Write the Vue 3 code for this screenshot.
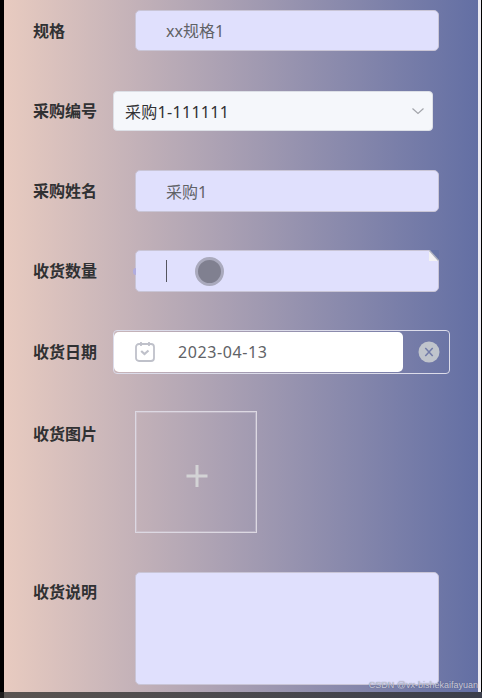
<script setup>
import { ref } from 'vue'

const form = ref({
  spec: 'xx规格1',
  orderNo: '采购1-111111',
  buyer: '采购1',
  date: '2023-04-13'
})
</script>

<template>
  <div class="page">
    <div class="form">
      <div class="row row-spec">
        <div class="label">规格</div>
        <div class="input input-spec">{{ form.spec }}</div>
      </div>

      <div class="row row-select">
        <div class="label">采购编号</div>
        <div class="select">
          <span>{{ form.orderNo }}</span>
          <svg class="arrow" viewBox="0 0 14 8" width="14" height="8">
            <path d="M1.5 1.5 L7 6.5 L12.5 1.5" fill="none" stroke="#a3a5ab" stroke-width="1.2" />
          </svg>
        </div>
      </div>

      <div class="row">
        <div class="label">采购姓名</div>
        <div class="input">{{ form.buyer }}</div>
      </div>

      <div class="row">
        <div class="label">收货数量</div>
        <div class="input input-active">
          <span class="knob"></span>
          <span class="caret"></span>
          <span class="touch"></span>
          <svg class="fold" viewBox="0 0 10 11" width="10" height="11">
            <path d="M0 0 H10 V11 Z" fill="#6673a5" />
            <path d="M0 0 L10 11 H0 Z" fill="#f3f2f3" />
            <path d="M0.5 0.5 L9.5 10.5" stroke="#aaaebd" stroke-width="1.4" />
          </svg>
        </div>
      </div>

      <div class="row row-date">
        <div class="label">收货日期</div>
        <div class="date">
          <div class="date-inner">
            <svg class="calendar" viewBox="0 0 20 20" width="20" height="20">
              <rect x="1" y="2" width="18" height="17" rx="3" fill="none" stroke="#bfc1ca" stroke-width="1.8" />
              <path d="M6 0 V4 M14 0 V4" stroke="#bfc1ca" stroke-width="1.8" />
              <path d="M6.2 9 L9.5 12 L13.5 8.5" fill="none" stroke="#bfc1ca" stroke-width="2.2" />
            </svg>
            <span>{{ form.date }}</span>
          </div>
          <svg class="clear" viewBox="0 0 22 22" width="22" height="22">
            <circle cx="11" cy="11" r="10.5" fill="#c0c4cc" />
            <path d="M7.3 7 L14.7 15 M14.7 7 L7.3 15" stroke="#727ba8" stroke-width="1.5" />
          </svg>
        </div>
      </div>

      <div class="row row-image">
        <div class="label">收货图片</div>
        <div class="upload">
          <svg viewBox="0 0 22 22" width="22" height="22">
            <path d="M11 0 V22 M0.5 11 H21.5" stroke="#d3d3d5" stroke-width="3" />
          </svg>
        </div>
      </div>

      <div class="row row-note">
        <div class="label">收货说明</div>
        <div class="input textarea"></div>
      </div>
    </div>

    <div class="bottom-bar"></div>
    <div class="watermark">CSDN @vx-bishekaifayuan</div>
  </div>
</template>

<style>
body {
  margin: 0;
  background: #000;
}
</style>

<style scoped>
.page {
  position: relative;
  box-sizing: border-box;
  width: 482px;
  height: 698px;
  padding: 0 1px 0 4px;
  overflow: hidden;
  background: #000;
  font-family: "Noto Sans", "Noto Sans CJK SC", sans-serif;
  font-size: 16px;
}

.form {
  display: flex;
  flex-direction: column;
  gap: 38px;
  box-sizing: border-box;
  height: 698px;
  padding: 10px 0 0 29px;
  border-right: 3px solid #eceaf2;
  background: linear-gradient(90deg, #e8cbc0, #636fa4);
}

.row {
  display: flex;
  flex: none;
  height: 42px;
}

.row-spec {
  height: 43px;
}

.row-select {
  height: 41px;
}

.row-date {
  height: 43px;
}

.row-image {
  height: 123px;
}

.row-note {
  height: 113px;
}

.label {
  flex: none;
  width: 80px;
  height: 42px;
  line-height: 40px;
  color: #303133;
  font-family: "Noto Sans CJK SC", sans-serif;
  font-weight: 600;
}

.row-select .label,
.row-note .label {
  line-height: 38px;
}

.row-date .label {
  line-height: 42px;
}

.row-image .label {
  line-height: 44px;
}

.input {
  position: relative;
  display: flex;
  align-items: center;
  box-sizing: border-box;
  width: 304px;
  height: 42px;
  margin-left: 22px;
  padding: 0 30px 1px;
  border: 1px solid #c9c5d6;
  border-radius: 5px;
  background: #e0e0fd;
  color: #606266;
}

.input-spec {
  height: 41px;
}

.select {
  display: flex;
  align-items: center;
  justify-content: space-between;
  box-sizing: border-box;
  width: 320px;
  height: 40px;
  padding: 0 7px 1px 11px;
  border: 1px solid #dcdfe6;
  border-radius: 4px;
  background: #f5f7fb;
  color: #303133;
  letter-spacing: 0.3px;
}

.knob {
  position: absolute;
  left: -3px;
  top: 17px;
  width: 3px;
  height: 7px;
  border-radius: 4px 0 0 4px;
  background: #b1addf;
}

.input-active {
  padding-bottom: 0;
}

.caret {
  width: 1px;
  height: 22px;
  background: #55555f;
}

.touch {
  box-sizing: border-box;
  width: 29px;
  height: 29px;
  margin-left: 28px;
  border: 3px solid #aaaabd;
  border-radius: 50%;
  background: #808090;
}

.fold {
  position: absolute;
  top: -1px;
  right: -1px;
}

.date {
  display: flex;
  align-items: center;
  justify-content: space-between;
  box-sizing: border-box;
  width: 337px;
  height: 44px;
  padding-right: 9px;
  border: 1px solid #dcdcea;
  border-radius: 4px;
}

.date-inner {
  display: flex;
  align-items: center;
  box-sizing: border-box;
  width: 289px;
  height: 40px;
  padding-left: 21px;
  border-radius: 5px;
  background: #fff;
  color: #606266;
  letter-spacing: 0.6px;
}

.calendar {
  margin-right: 23px;
}

.upload {
  display: flex;
  align-items: center;
  justify-content: center;
  box-sizing: border-box;
  width: 122px;
  height: 122px;
  margin-left: 22px;
  padding-top: 8px;
  padding-left: 1px;
  border: 1px solid #dcd8e2;
  outline: 1px solid rgba(220, 216, 226, 0.35);
  outline-offset: -2px;
}

.textarea {
  height: 113px;
}

.bottom-bar {
  position: absolute;
  left: 0;
  right: 0;
  bottom: 0;
  height: 6px;
  background: linear-gradient(90deg, #1e1c1b 4px, #5a5451 4px, #3b3e4a);
}

.watermark {
  position: absolute;
  right: 4px;
  bottom: 6px;
  font-family: "Liberation Sans", sans-serif;
  font-size: 9px;
  line-height: 13px;
  white-space: nowrap;
  color: rgba(222, 222, 232, 0.85);
  text-shadow: 0 0 1px #555a78;
}
</style>
